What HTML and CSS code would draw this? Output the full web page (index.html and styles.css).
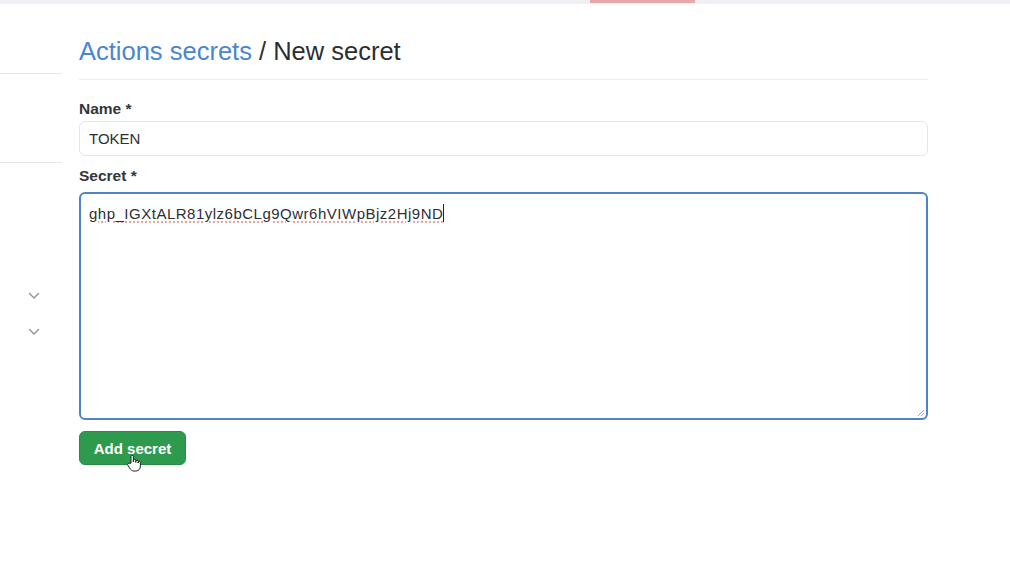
FILE: index.html
```html
<!DOCTYPE html>
<html lang="en">
<head>
<meta charset="utf-8">
<title>Actions secrets / New secret</title>
<link rel="stylesheet" href="styles.css">
</head>
<body>
<div class="topbar"><span class="topbar-mark"></span></div>
<div class="layout">
  <aside class="sidebar">
    <div class="side-line side-line-1"></div>
    <div class="side-line side-line-2"></div>
    <div class="side-chevrons">
      <svg class="chev" width="12" height="8" viewBox="0 0 12 8"><path d="M1.5 1.5 L6 6 L10.5 1.5" fill="none" stroke="#8c939b" stroke-width="1.4" stroke-linecap="round" stroke-linejoin="round"/></svg>
      <svg class="chev" width="12" height="8" viewBox="0 0 12 8"><path d="M1.5 1.5 L6 6 L10.5 1.5" fill="none" stroke="#8c939b" stroke-width="1.4" stroke-linecap="round" stroke-linejoin="round"/></svg>
    </div>
  </aside>
  <main class="main">
    <h1 class="title"><a class="title-link" href="#">Actions secrets</a> / New secret</h1>
    <form class="form">
      <label class="label">Name *</label>
      <div class="input">TOKEN</div>
      <label class="label label-secret">Secret *</label>
      <div class="textarea"><span class="secret-text">ghp_IGXtALR81ylz6bCLg9Qwr6hVIWpBjz2Hj9ND</span><span class="caret"></span>
        <svg class="resize" width="10" height="10" viewBox="0 0 10 10"><path d="M9 3 L3 9 M9 6 L6 9" stroke="#9aa3ad" stroke-width="1"/></svg>
      </div>
      <div class="actions">
        <button type="button" class="btn">Add secret
          <svg class="hand" width="16" height="18" viewBox="0 0 16 18"><path d="M5 9 V2.5 a1.2 1.2 0 0 1 2.4 0 V8 V6.5 a1.2 1.2 0 0 1 2.4 0 V8.5 V7.3 a1.2 1.2 0 0 1 2.4 0 V9 V8.3 a1.1 1.1 0 0 1 2.2 0 V12 c0 3 -1.8 5 -4.5 5 H8 c-2 0 -3 -1 -4.2 -2.8 L1.6 10.8 a1.1 1.1 0 0 1 1.8 -1.2 Z" fill="#fff" stroke="#222" stroke-width="1" stroke-linejoin="round"/></svg>
        </button>
      </div>
    </form>
  </main>
</div>
</body>
</html>
```
FILE: styles.css
```css
* { box-sizing: border-box; }
html, body { margin: 0; padding: 0; background: #ffffff; }
body {
  font-family: "Liberation Sans", Arial, sans-serif;
  color: #24292f;
  width: 1010px;
  height: 564px;
  overflow: hidden;
}
.topbar {
  height: 4px;
  background: #eef0f3;
  display: flex;
}
.topbar-mark {
  margin-left: 590px;
  width: 105px;
  height: 3px;
  background: #e4a8aa;
}
.layout {
  display: flex;
}
.sidebar {
  width: 62px;
  flex: none;
  display: flex;
  flex-direction: column;
}
.side-line {
  height: 1px;
  background: #e6e8eb;
}
.side-line-1 { margin-top: 69px; }
.side-line-2 { margin-top: 88px; }
.side-chevrons {
  display: flex;
  flex-direction: column;
  align-items: flex-start;
  padding-left: 28px;
  margin-top: 129px;
  gap: 28px;
}
.chev { display: block; }
.main {
  margin-left: 17px;
  width: 849px;
}
.title {
  margin: 0;
  padding-top: 31px;
  padding-bottom: 12px;
  font-size: 25.5px;
  font-weight: 400;
  line-height: 32px;
  color: #2a2e33;
  border-bottom: 1px solid #eaecef;
  letter-spacing: 0;
}
.title-link {
  color: #4a86cf;
  text-decoration: none;
}
.form {
  display: flex;
  flex-direction: column;
}
.label {
  font-size: 15.5px;
  font-weight: 700;
  color: #33373b;
  margin-top: 20px;
  line-height: 18px;
}
.label-secret { margin-top: 11px; }
.input {
  margin-top: 3px;
  height: 35px;
  border: 1px solid #e3e6ea;
  border-radius: 6px;
  padding: 0 9px;
  font-size: 15px;
  line-height: 33px;
  color: #2c3034;
}
.textarea {
  position: relative;
  margin-top: 7px;
  height: 228px;
  border: 2px solid #4f83c9;
  border-radius: 6px;
  padding: 9px 8px;
  font-size: 15px;
  line-height: 21px;
  color: #2c3034;
}
.secret-text {
  text-decoration: underline dotted #e08a8a;
  text-underline-offset: 3px;
  letter-spacing: 0.5px;
}
.caret {
  display: inline-block;
  width: 1px;
  height: 18px;
  background: #222;
  vertical-align: -3px;
}
.resize {
  position: absolute;
  right: 1px;
  bottom: 1px;
}
.actions {
  margin-top: 11px;
  display: flex;
}
.btn {
  position: relative;
  height: 34px;
  width: 107px;
  border: 1px solid #2a8a45;
  border-radius: 6px;
  background: #2e9a4e;
  color: #ffffff;
  font-family: "Liberation Sans", Arial, sans-serif;
  font-size: 15px;
  font-weight: 700;
  padding: 0;
  cursor: pointer;
}
.hand {
  position: absolute;
  left: 46px;
  top: 22px;
}
```
